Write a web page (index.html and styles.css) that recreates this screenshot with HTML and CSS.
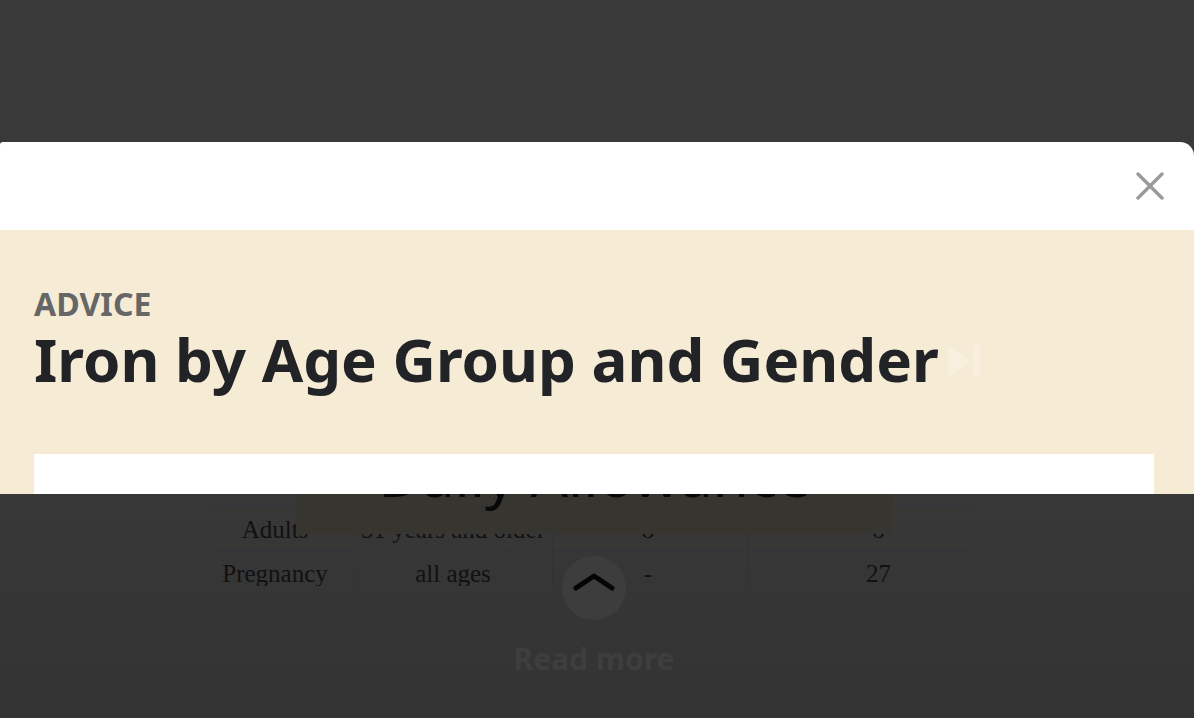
FILE: index.html
```html
<!DOCTYPE html>
<html lang="en">
<head>
<meta charset="utf-8">
<title>Iron by Age Group and Gender</title>
<link rel="stylesheet" href="styles.css">
</head>
<body>
<div class="backdrop-top"></div>
<section class="sheet">
  <header class="sheet-head">
    <button class="close" aria-label="Close">
      <svg width="28" height="28" viewBox="0 0 28 28"><path d="M2 2 L26 26 M26 2 L2 26" stroke="#9a9a9a" stroke-width="3.4" stroke-linecap="round" fill="none"/></svg>
    </button>
  </header>
  <div class="sheet-body">
    <div class="kicker">ADVICE</div>
    <h1 class="title">Iron by Age Group and Gender<svg class="ghost" width="34" height="34" viewBox="0 0 34 34"><path d="M1 1 L24 17 L1 33 Z" fill="#f8efdf"/><rect x="26" y="1" width="7" height="32" fill="#f8efdf"/></svg></h1>
    <div class="figure"></div>
  </div>
</section>
<main class="behind">
  <div class="table-wrap">
    <div class="caption-box"><span>Daily Allowance</span></div>
    <div class="table">
      <div class="row">
        <div class="cell c1">Adults</div>
        <div class="cell c2">51 years and older</div>
        <div class="cell c3">8</div>
        <div class="cell c4">8</div>
      </div>
      <div class="row">
        <div class="cell c1">Pregnancy</div>
        <div class="cell c2">all ages</div>
        <div class="cell c3">-</div>
        <div class="cell c4">27</div>
      </div>
    </div>
  </div>
  <button class="toggle" aria-label="Collapse">
    <svg width="44" height="22" viewBox="0 0 44 22"><path d="M4 17 L22 5 L40 17" stroke="#050505" stroke-width="5" stroke-linecap="round" stroke-linejoin="round" fill="none"/></svg>
  </button>
  <div class="read-more">Read more</div>
</main>
</body>
</html>
```

FILE: styles.css
```css
* { box-sizing: border-box; }
html, body { margin: 0; padding: 0; }
body {
  width: 1194px;
  height: 718px;
  overflow: hidden;
  background: linear-gradient(#3a3a3a 0%, #393939 60%, #333333 100%);
  font-family: "Noto Sans", "Open Sans", sans-serif;
}
.backdrop-top { height: 142px; }

.sheet {
  position: relative;
  z-index: 2;
  height: 352px;
  overflow: hidden;
  background: #ffffff;
  border-radius: 3px 14px 0 0;
}
.sheet-head {
  height: 88px;
  display: flex;
  justify-content: flex-end;
  align-items: center;
  padding-right: 30px;
}
.close {
  width: 28px; height: 28px;
  padding: 0; border: 0; background: none;
  display: flex;
}
.sheet-body {
  background: #f6ebd5;
  height: 264px;
  padding: 55px 40px 0 34px;
}
.kicker {
  font-size: 32px;
  line-height: 38.4px;
  font-weight: 700;
  color: #666666;
  letter-spacing: 0.1px;
}
.title {
  margin: 0;
  font-size: 60px;
  line-height: 72px;
  font-weight: 700;
  color: #222326;
  white-space: nowrap;
  display: flex;
  align-items: center;
}
.ghost { margin-left: 8px; margin-top: 4px; }
.figure {
  margin-top: 59px;
  height: 80px;
  background: #ffffff;
}

.behind {
  position: relative;
  z-index: 1;
  display: flex;
  flex-direction: column;
  align-items: center;
  padding-right: 6px;
}
.table-wrap {
  position: relative;
  align-self: flex-start;
  width: 760px;
  margin-left: 213px;
  height: 92px;
  padding-top: 10px;
}
.caption-box {
  position: absolute;
  left: 83px;
  top: -60px;
  width: 597px;
  height: 100px;
  background: #36352f;
  display: flex;
  justify-content: center;
  align-items: flex-end;
  overflow: hidden;
  z-index: 2;
}
.caption-box span {
  font-family: "Noto Sans", sans-serif;
  font-size: 59px;
  line-height: 1;
  color: #080808;
  margin-bottom: 30px;
}
.table {
  height: 82px;
  overflow: hidden;
  border-top: 1px dotted #2f2f3a;
  padding-top: 3px;
}
.row {
  display: grid;
  grid-template-columns: 140px 191px 191px 1fr;
  column-gap: 4px;
  height: 44px;
}
.cell {
  border-bottom: 1px dotted #2f2f3a;
  border-left: 1px dotted #2f2f3a;
  display: flex;
  align-items: center;
  justify-content: center;
  font-family: "Liberation Serif", "Times New Roman", serif;
  font-size: 25px;
  color: #111111;
}
.row:last-child .cell { border-bottom: 0; }
.cell.c1 { border-left: 0; padding-right: 16px; }
.cell.c4 { padding-left: 36px; }

.toggle {
  margin-top: -30px;
  width: 64px;
  height: 64px;
  border-radius: 50%;
  border: 0;
  padding: 0 0 12px;
  background: #3d3d3d;
  display: flex;
  justify-content: center;
  align-items: center;
  position: relative;
  z-index: 3;
}
.read-more {
  margin-top: 19px;
  font-size: 30px;
  font-weight: 700;
  line-height: 40px;
  color: #3e3e3e;
}
```
